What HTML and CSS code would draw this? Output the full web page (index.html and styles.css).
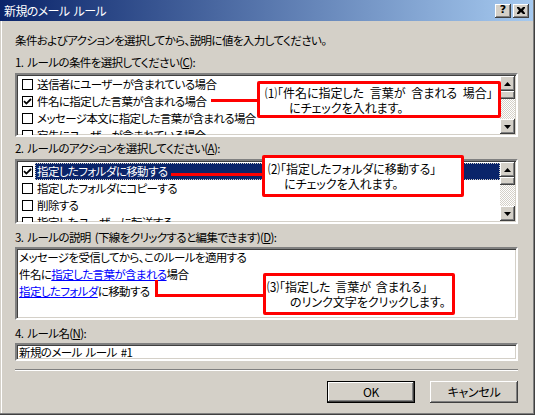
FILE: index.html
```html
<!DOCTYPE html>
<html lang="ja">
<head>
<meta charset="utf-8">
<title>新規のメール ルール</title>
<link rel="stylesheet" href="styles.css">
</head>
<body>
<div class="window">
  <div class="titlebar">
    <span class="title">新規のメール ルール</span>
    <div class="capbtns">
      <span class="capbtn help">?</span>
      <span class="capbtn close"><svg width="8" height="7" viewBox="0 0 8 7"><path d="M0 0h2l2 2 2-2h2v1L6 3.5 8 6v1H6L4 5 2 7H0V6l2-2.5L0 1z" fill="#000"/></svg></span>
    </div>
  </div>
  <div class="content">
    <p class="intro">条件およびアクションを選択してから、説明に値を入力してください。</p>

    <p class="label l1">1. ルールの条件を選択してください(<u>C</u>):</p>
    <div class="listbox lb1">
      <ul class="rows">
        <li class="row"><span class="cb"></span><span class="txt">送信者にユーザーが含まれている場合</span></li>
        <li class="row"><span class="cb on"><svg width="9" height="9" viewBox="0 0 9 9"><path d="M1 4.2 3.4 6.6 8 2" fill="none" stroke="#000" stroke-width="1.8"/></svg></span><span class="txt">件名に指定した言葉が含まれる場合</span></li>
        <li class="row"><span class="cb"></span><span class="txt">メッセージ本文に指定した言葉が含まれる場合</span></li>
        <li class="row"><span class="cb"></span><span class="txt">宛先にユーザーが含まれている場合</span></li>
      </ul>
      <div class="scrollbar">
        <span class="sbtn"><svg width="7" height="4" viewBox="0 0 7 4"><path d="M3.5 0 7 4H0z"/></svg></span>
        <span class="thumb"></span>
        <span class="track"></span>
        <span class="sbtn"><svg width="7" height="4" viewBox="0 0 7 4"><path d="M0 0h7L3.5 4z"/></svg></span>
      </div>
    </div>

    <p class="label l2">2. ルールのアクションを選択してください(<u>A</u>):</p>
    <div class="listbox lb2">
      <ul class="rows">
        <li class="row"><span class="cb on"><svg width="9" height="9" viewBox="0 0 9 9"><path d="M1 4.2 3.4 6.6 8 2" fill="none" stroke="#000" stroke-width="1.8"/></svg></span><span class="txt sel">指定したフォルダに移動する</span></li>
        <li class="row"><span class="cb"></span><span class="txt">指定したフォルダにコピーする</span></li>
        <li class="row"><span class="cb"></span><span class="txt">削除する</span></li>
        <li class="row"><span class="cb"></span><span class="txt">指定したユーザーに転送する</span></li>
      </ul>
      <div class="scrollbar">
        <span class="sbtn"><svg width="7" height="4" viewBox="0 0 7 4"><path d="M3.5 0 7 4H0z"/></svg></span>
        <span class="thumb"></span>
        <span class="track"></span>
        <span class="sbtn"><svg width="7" height="4" viewBox="0 0 7 4"><path d="M0 0h7L3.5 4z"/></svg></span>
      </div>
    </div>

    <p class="label l3">3. ルールの説明 (下線をクリックすると編集できます)(<u>D</u>):</p>
    <div class="descbox">
      <p>メッセージを受信してから、このルールを適用する</p>
      <p>件名に<a href="#">指定した言葉が含まれる</a>場合</p>
      <p><a href="#">指定したフォルダ</a>に移動する</p>
    </div>

    <p class="label l4">4. ルール名(<u>N</u>):</p>
    <div class="input">新規のメール ルール #1</div>

    <div class="sep"></div>

    <div class="buttons">
      <span class="btn default">OK</span>
      <span class="btn">キャンセル</span>
    </div>
  </div>

  <div class="wire w1"></div>
  <div class="wire w2"></div>
  <div class="wire w3a"></div>
  <div class="wire w3b"></div>

  <div class="callout c1">
    <span>⑴「件名に指定した 言葉が 含まれる 場合」</span>
    <span class="in1">にチェックを入れます。</span>
  </div>
  <div class="callout c2">
    <span>⑵「指定したフォルダに移動する」</span>
    <span class="in2">にチェックを入れます。</span>
  </div>
  <div class="callout c3">
    <span>⑶「指定した 言葉が 含まれる」</span>
    <span class="in3">のリンク文字をクリックします。</span>
  </div>
</div>
</body>
</html>
```

FILE: styles.css
```css
* { box-sizing: border-box; }
html, body {
  margin: 0;
  padding: 0;
  width: 535px;
  height: 415px;
  overflow: hidden;
  background: #d4d0c8;
}
body {
  font-family: "Noto Sans CJK JP", "Noto Sans", sans-serif;
  font-size: 11.5px;
  letter-spacing: -0.6px;
  word-spacing: 2px;
  font-feature-settings: "palt";
  color: #000;
}
p { margin: 0; }
ul { margin: 0; padding: 0; list-style: none; }

.window {
  position: relative;
  width: 535px;
  height: 415px;
  background: #d4d0c8;
  box-shadow: inset -1px -1px #404040, inset -2px -2px #808080, inset 1px 0 #d4d0c8, inset 2px 0 #fff;
}

.titlebar {
  height: 21px;
  margin-right: 2px;
  background: linear-gradient(to right, #0a246a, #a6caf0);
  display: flex;
  align-items: center;
  justify-content: space-between;
  padding: 0 4px 0 4px;
}
.title {
  color: #fff;
  line-height: 21px;
  font-size: 12px;
}
.capbtns { display: flex; gap: 2px; }
.capbtn {
  width: 16px;
  height: 14px;
  background: #d4d0c8;
  box-shadow: inset -1px -1px #404040, inset 1px 1px #fff, inset -2px -2px #808080;
  display: flex;
  align-items: center;
  justify-content: center;
  font-family: "DejaVu Sans", sans-serif;
  font-weight: bold;
  font-size: 11px;
  letter-spacing: 0;
  line-height: 14px;
  padding-bottom: 1px;
}

.content {
  padding: 11px 17px 0 15px;
  display: flex;
  flex-direction: column;
}
.intro { line-height: 16px; }
.label { line-height: 16px; }
.l1 { margin-top: 6px; }
.l2 { margin-top: 3px; }
.l3 { margin-top: 5px; }
.l4 { margin-top: 5px; }

.listbox, .descbox, .input {
  background: #fff;
  border: 2px solid;
  border-color: #808080 #fff #fff #808080;
  box-shadow: inset 1px 1px #404040, inset -1px -1px #d4d0c8;
}
.listbox {
  display: flex;
  overflow: hidden;
}
.lb1 { margin-top: 3px; height: 64px; }
.lb2 { margin-top: 3px; height: 65px; }
.rows { flex: 1; overflow: hidden; padding-top: 1px; }
.lb2 .rows { padding-top: 2px; }
.row {
  display: flex;
  align-items: center;
  height: 17px;
  line-height: 17px;
  white-space: nowrap;
}
.cb {
  width: 11px;
  height: 11px;
  margin-left: 5px;
  margin-right: 2px;
  border: 1px solid #000;
  background: #fff;
  display: flex;
  align-items: center;
  justify-content: center;
  flex: none;
}
.txt { padding: 0 2px; }
.txt.sel {
  flex: 1;
  background: #0a246a;
  color: #fff;
  outline: 1px dotted #d4d0c8;
  outline-offset: -1px;
  height: 17px;
}

.scrollbar {
  width: 15px;
  flex: none;
  display: flex;
  flex-direction: column;
  margin: 1px 1px 1px 0;
}
.sbtn, .thumb {
  background: #d4d0c8;
  box-shadow: inset -1px -1px #404040, inset 1px 1px #fff, inset -2px -2px #808080;
  flex: none;
}
.sbtn {
  height: 15px;
  display: flex;
  align-items: center;
  justify-content: center;
}
.thumb { height: 8px; }
.track {
  flex: 1;
  background: repeating-conic-gradient(#d4d0c8 0 25%, #fff 0 50%) 0 0 / 2px 2px;
}

.descbox {
  margin-top: 2px;
  height: 73px;
  padding: 0 2px;
}
.descbox p { line-height: 17px; white-space: nowrap; }
.descbox a { color: #0000ff; text-decoration: underline; }

.input {
  margin-top: 2px;
  height: 18px;
  padding: 0 2px;
  line-height: 14px;
}

.sep {
  margin-top: 8px;
  height: 2px;
  border-top: 1px solid #808080;
  border-bottom: 1px solid #fff;
}

.buttons {
  margin-top: 10px;
  display: flex;
  justify-content: flex-end;
  gap: 15px;
}
.btn {
  width: 88px;
  height: 22px;
  background: #d4d0c8;
  box-shadow: inset -1px -1px #404040, inset 1px 1px #fff, inset -2px -2px #808080;
  display: flex;
  align-items: center;
  justify-content: center;
  line-height: 16px;
  font-size: 12px;
  letter-spacing: -0.3px;
}
.btn.default {
  box-shadow: inset 0 0 0 1px #000, inset -2px -2px #404040, inset 2px 2px #fff, inset -3px -3px #808080;
}

.wire {
  position: absolute;
  background: #ff0000;
}
.w1 { left: 211px; top: 99px; width: 47px; height: 3px; }
.w2 { left: 171px; top: 173px; width: 92px; height: 3px; }
.w3a { left: 155px; top: 280px; width: 3px; height: 17px; }
.w3b { left: 155px; top: 294px; width: 109px; height: 3px; }

.callout {
  position: absolute;
  background: #fff;
  border: 3px solid #ff0000;
  border-radius: 2px;
  display: flex;
  flex-direction: column;
  justify-content: center;
  padding-left: 4px;
  line-height: 15px;
  white-space: nowrap;
  font-size: 12px;
  letter-spacing: 0;
  word-spacing: 2px;
}
.c1 { left: 257px; top: 81px; width: 244px; height: 37px; padding-left: 5px; word-spacing: 3px; }
.c2 { left: 262px; top: 155px; width: 202px; height: 42px; padding-left: 3px; }
.c3 { left: 263px; top: 273px; width: 192px; height: 42px; padding-left: 1px; }
.in1 { padding-left: 24px; }
.in2 { padding-left: 16px; }
.in3 { padding-left: 23px; }
```
